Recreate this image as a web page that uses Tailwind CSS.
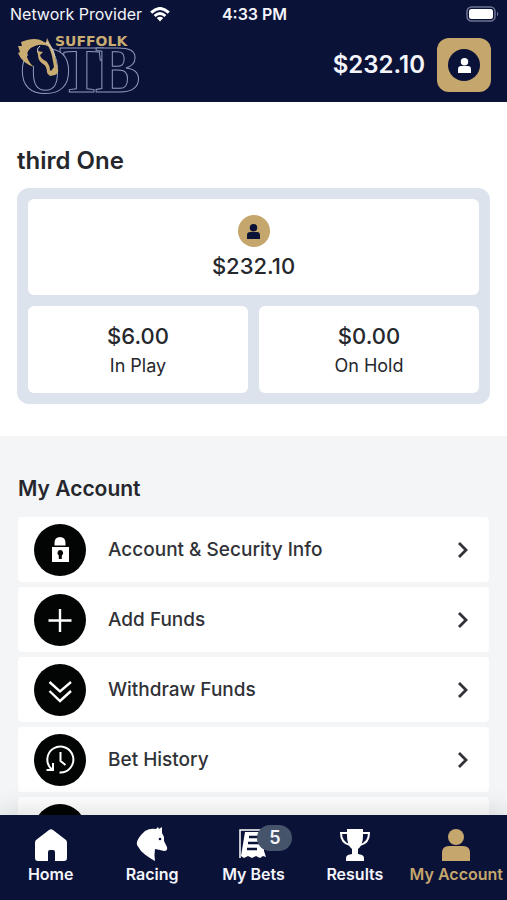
<!DOCTYPE html>
<html lang="en">
<head>
<meta charset="utf-8">
<meta name="viewport" content="width=device-width, initial-scale=1">
<title>My Account</title>
<script src="https://cdn.jsdelivr.net/npm/@tailwindcss/browser@4"></script>
</head>
<body class="flex h-dvh flex-col overflow-hidden bg-white font-['Inter',sans-serif] text-[#25272c]">
<svg class="hidden" aria-hidden="true">
  <symbol id="person" viewBox="0 0 28 32"><circle cx="14" cy="8" r="8"/><path d="M0 32v-8q0-7 7-7h14q7 0 7 7v8z"/></symbol>
  <symbol id="chevron" viewBox="0 0 12 18"><path d="M2 2l7 7-7 7" fill="none" stroke="currentColor" stroke-width="2.800"/></symbol>
</svg>

<header class="bg-[#0b1238] text-[#f4f5fb]">
  <div class="grid h-7 grid-cols-3 items-center pr-2 pl-[10px]">
    <div class="flex items-center gap-2 text-base whitespace-nowrap">
      <span>Network Provider</span>
      <svg class="h-[15px] w-5 shrink-0" viewBox="0 0 20 15" fill="none" stroke="#fff" stroke-width="3" aria-label="Wi-Fi"><path d="M1.2 5.6Q10-2.6 18.800 5.600M4.600 9Q10 4 15.400 9"/><path d="M10 14.500l-3.200-3.400q3.200-2.600 6.400 0z" fill="#fff" stroke="none"/></svg>
    </div>
    <time class="text-center text-base font-semibold">4:33 PM</time>
    <svg class="h-4 w-[33px] justify-self-end" viewBox="0 0 33 16" aria-label="Battery full"><rect x="1" y="1" width="28" height="14" rx="4.500" fill="none" stroke="#6f7490" stroke-width="1.500"/><rect x="3" y="3" width="24" height="10" rx="2.500" fill="#fff"/><path d="M31 5.500q2.500 2.500 0 5z" fill="#6f7490"/></svg>
  </div>
  <div class="flex h-[74px] items-center justify-between px-4">
    <a href="#" aria-label="Suffolk OTB" class="block">
      <svg class="h-[66px] w-[126px] overflow-visible" viewBox="0 0 126 66">
        <g font-family="Liberation Serif, serif" font-weight="700" font-size="68" fill="#0b1238" stroke="#8f9abd" stroke-width="1">
          <text x="43" y="60">T</text><text x="79" y="60">B</text><text x="3" y="61">O</text>
        </g>
        <path d="M13 16Q24 9 33 12l5 10 4 17-3 4-7-1-1-10-6-6-5 10Q9 28 13 16z" fill="#0b1238"/>
        <path d="M18 35Q6 31 2 21L4 20 2 14l4 0-1-4Q20 4 28 10q5 1 6 5-8-4-15-1-9 3-8 11 2 6 7 10z" fill="#c9ac72"/>
        <path d="M30 11l1-5 3 6q4 6 5 12l3 13q1 4-3 6l-5 1-3-3 3-3 1 1 3-4-2-11q-2-8-6-13z" fill="#c9ac72"/>
        <path d="M21 19l6 1-3 3q1 4 6 6 4 4 4 10l-3 2q0-7-4-9-5-3-5-9z" fill="#c9ac72"/>
        <path d="M30 10q7 5 9 15M24 14q-4 3-2 6" fill="none" stroke="#d6d8e4"/>
        <text x="39" y="14" font-family="DejaVu Sans, sans-serif" font-weight="700" font-size="14" fill="#c9ac72">SUFFOLK</text>
      </svg>
    </a>
    <div class="flex items-center gap-3">
      <span class="text-2xl font-semibold">$232.10</span>
      <button type="button" aria-label="Account" class="flex size-[54px] items-center justify-center rounded-xl bg-[#c5a66c]">
        <span class="flex size-8 items-center justify-center rounded-full bg-[#0b1238]"><svg class="h-[15px] w-[13px] fill-white"><use href="#person"/></svg></span>
      </button>
    </div>
  </div>
</header>

<main class="min-h-0 flex-1 overflow-y-auto [scrollbar-width:none]">
  <section class="px-[17px] pt-[43px] pb-8">
    <h1 class="text-2xl font-semibold">third One</h1>
    <div class="mt-[11px] grid grid-cols-2 gap-[11px] rounded-xl bg-[#dce3ed] p-[11px] text-center">
      <div class="col-span-2 flex flex-col items-center rounded-md bg-white pt-4 pb-[14px]">
        <span class="flex size-8 items-center justify-center rounded-full bg-[#c5a66c]"><svg class="h-[15px] w-[13px] fill-[#0b1238]"><use href="#person"/></svg></span>
        <span class="mt-1 text-[22px] leading-[30px] font-[550]">$232.10</span>
      </div>
      <div class="flex flex-col rounded-md bg-white pt-[15px] pb-3">
        <span class="text-[22px] leading-[30px] font-[550]">$6.00</span><span class="text-lg leading-[30px]">In Play</span>
      </div>
      <div class="flex flex-col rounded-md bg-white pt-[15px] pb-3">
        <span class="text-[22px] leading-[30px] font-[550]">$0.00</span><span class="text-lg leading-[30px]">On Hold</span>
      </div>
    </div>
  </section>

  <section class="bg-[#f3f5f7] px-[18px] pt-[37px] pb-8">
    <h2 class="text-[21px] leading-8 font-semibold">My Account</h2>
    <ul class="mt-3 flex flex-col gap-[5px] text-[19px] leading-[29px] font-[550] text-[#303238]">
      <li><a href="#" class="flex h-[65px] items-center rounded-sm bg-white pr-5 pl-4">
        <svg class="size-[52px]" viewBox="0 0 52 52"><circle cx="26" cy="26" r="26" fill="#030505"/><path fill="#fff" d="M20.500 21.500V19q0-6 5.500-6t5.500 6v2.500zM18 23h17v15H18z"/><path d="M26.300 26a3 3 0 0 1 1.500 5.500V35h-3v-3.500a3 3 0 0 1 1.500-5.500z" fill="#030505"/></svg>
        <span class="ml-[22px] flex-1">Account &amp; Security Info</span><svg class="h-[18px] w-3"><use href="#chevron"/></svg></a></li>
      <li><a href="#" class="flex h-[65px] items-center rounded-sm bg-white pr-5 pl-4">
        <svg class="size-[52px]" viewBox="0 0 52 52"><circle cx="26" cy="26" r="26" fill="#030505"/><path d="M26 15v23M14.500 26.500h23" stroke="#fff" stroke-width="2.400"/></svg>
        <span class="ml-[22px] flex-1">Add Funds</span><svg class="h-[18px] w-3"><use href="#chevron"/></svg></a></li>
      <li><a href="#" class="flex h-[65px] items-center rounded-sm bg-white pr-5 pl-4">
        <svg class="size-[52px]" viewBox="0 0 52 52"><circle cx="26" cy="26" r="26" fill="#030505"/><path d="M15.500 18L26 27.500 37 18M15.500 27L26 37l11-10" fill="none" stroke="#fff" stroke-width="2.400"/></svg>
        <span class="ml-[22px] flex-1">Withdraw Funds</span><svg class="h-[18px] w-3"><use href="#chevron"/></svg></a></li>
      <li><a href="#" class="flex h-[65px] items-center rounded-sm bg-white pr-5 pl-4">
        <svg class="size-[52px]" viewBox="0 0 52 52"><circle cx="26" cy="26" r="26" fill="#030505"/><path d="M18 35.500A13 13 0 1 1 25.500 38.500M12.500 36H19V29M26.500 18v9l5 4" fill="none" stroke="#fff" stroke-width="2"/></svg>
        <span class="ml-[22px] flex-1">Bet History</span><svg class="h-[18px] w-3"><use href="#chevron"/></svg></a></li>
      <li><a href="#" aria-label="More account options" class="flex h-[65px] items-center rounded-sm bg-white pr-5 pl-4">
        <svg class="size-[52px]" viewBox="0 0 52 52"><circle cx="26" cy="26" r="26" fill="#030505"/></svg></a></li>
    </ul>
  </section>
</main>

<nav class="relative h-[85px] shrink-0 bg-[#0b1238] pt-[14px] shadow-[0_-4px_24px_rgba(0,0,0,0.14)]">
  <ul class="grid grid-cols-5 text-base leading-[22px] font-semibold whitespace-nowrap text-[#f4f5fb]">
    <li><a href="#" class="flex flex-col items-center gap-[2px]"><svg class="h-8 w-8" viewBox="0 0 32 32" fill="#fff"><path d="M14 1q2-1.500 4 0l13 10q1 1 1 3v15q0 3-3 3h-9V23q0-2-2-2h-3q-2 0-2 2v9H3q-3 0-3-3V14q0-2 1-3z"/></svg>Home</a></li>
    <li><a href="#" class="flex flex-col items-center gap-[2px]"><svg class="-mt-[2px] h-[34px] w-8" viewBox="0 0 32 34"><path fill="#fff" d="M19 34Q10 29 5 24L1 18Q0 14 5 8l4-4q5-3 11-2l2-2 1 2 3-2v6l2 4v4l3 6q1 4-3 4l-4-1-5-1q-1 5 0 12z"/><circle cx="24" cy="12" r="1.300" fill="#0b1238"/></svg>Racing</a></li>
    <li><a href="#" class="relative flex flex-col items-center gap-[2px]"><svg class="h-8 w-8" viewBox="0 0 32 32"><path d="M28 1H3v28" fill="none" stroke="#fff" stroke-width="1.500"/><path d="M8 3h19v19l2 6-3-1-3 2-4-2-4 2-4-2-4 2-3-2z" fill="#fff"/><path d="M12 8h13M11 14h11M10 20h10" stroke="#0b1238" stroke-width="2.400"/></svg>My Bets
      <span class="absolute -top-1 left-1/2 ml-1 flex h-[26px] w-[35px] items-center justify-center rounded-full bg-[#46546b] text-lg">5</span></a></li>
    <li><a href="#" class="flex flex-col items-center gap-[2px]"><svg class="h-8 w-8" viewBox="0 0 32 32"><path fill="#fff" d="M8 0h16v7q0 9-5 13v5l4 1q2 1 2 3v3H7v-3q0-2 2-3l4-1v-5Q8 16 8 7z"/><path d="M8 4H2q0 10 9 12M24 4h6q0 10-9 12" fill="none" stroke="#fff" stroke-width="2"/></svg>Results</a></li>
    <li><a href="#" aria-current="page" class="flex flex-col items-center gap-[2px] text-[#c5a66c]"><svg class="h-8 w-7 fill-current"><use href="#person"/></svg>My Account</a></li>
  </ul>
</nav>
</body>
</html>
